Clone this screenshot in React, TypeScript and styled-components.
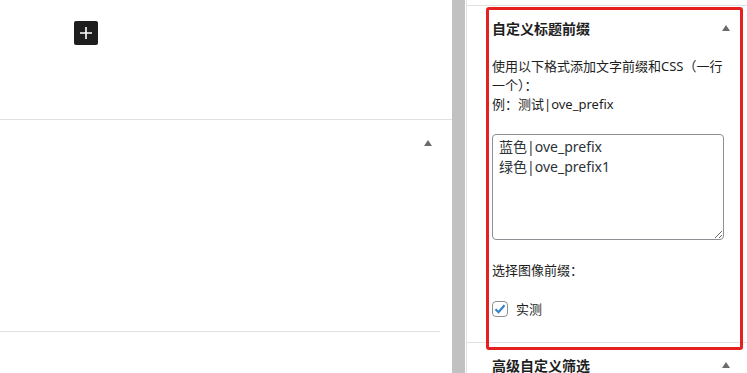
import React from 'react';
import styled, { createGlobalStyle } from 'styled-components';

const Global = createGlobalStyle`
  html, body { margin: 0; padding: 0; background: #fff; }
  body { font-family: "Noto Sans", "Noto Sans CJK SC", sans-serif; color: #1e1e1e; }
  * { box-sizing: border-box; }
`;

const Page = styled.div`
  display: flex;
  width: 747px;
  height: 373px;
  overflow: hidden;
  background: #fff;
`;

const Editor = styled.div`
  width: 452px;
  flex-shrink: 0;
  display: flex;
  flex-direction: column;
`;

const EditorTop = styled.div`
  height: 120px;
  flex-shrink: 0;
  border-bottom: 1px solid #e0e0e0;
  padding: 21px 0 0 74px;
`;

const PlusButton = styled.button`
  width: 24px;
  height: 24px;
  border: none;
  border-radius: 2px;
  background: #1e1e1e;
  padding: 0;
  display: flex;
  align-items: center;
  justify-content: center;
  cursor: pointer;
`;

const MetaBox = styled.div`
  height: 212px;
  flex-shrink: 0;
  margin-right: 12px;
  border-bottom: 1px solid #e0e0e0;
  display: flex;
  justify-content: flex-end;
  align-items: flex-start;
  padding: 20px 8px 0 0;
`;

const Caret = styled.span`
  display: block;
  width: 0;
  height: 0;
  border-left: 4px solid transparent;
  border-right: 4px solid transparent;
  border-bottom: 6px solid #6b6b6b;
`;

const Scrollbar = styled.div`
  width: 13px;
  flex-shrink: 0;
  background: #c1c1c1;
  margin-right: 1px;
`;

const Sidebar = styled.div`
  flex: 1;
  border-left: 1px solid #e0e0e0;
  display: flex;
  flex-direction: column;
`;

const PrevSection = styled.div`
  height: 6px;
  flex-shrink: 0;
  border-bottom: 1px solid #e0e0e0;
`;

const Section = styled.section<{ $height?: number }>`
  position: relative;
  flex-shrink: 0;
  ${(p) => (p.$height ? `height: ${p.$height}px;` : '')}
  border-bottom: 1px solid #e0e0e0;
  padding: 0 17px 0 25px;
`;

const Header = styled.div`
  height: 44px;
  display: flex;
  align-items: center;
  justify-content: space-between;
`;

const Title = styled.h2`
  margin: 0;
  font-size: 14px;
  font-weight: 700;
  color: #1e1e1e;
`;

const Body = styled.div`
  display: flex;
  flex-direction: column;
  padding-top: 7px;
  font-size: 13px;
  line-height: 19px;
  color: #1e1e1e;
`;

const Help = styled.p`
  margin: 0;
`;

const TextArea = styled.textarea`
  display: block;
  width: 232px;
  height: 106px;
  margin-top: 20px;
  border: 1px solid #8c8f94;
  border-radius: 4px;
  padding: 2px 6px;
  font-family: "Noto Sans", "Noto Sans CJK SC", sans-serif;
  font-size: 14px;
  line-height: 20px;
  color: #2c3338;
  resize: vertical;
  background: #fff;
`;

const Label = styled.div`
  margin-top: 21px;
`;

const CheckRow = styled.label`
  margin-top: 19px;
  display: flex;
  align-items: center;
  gap: 8px;
  height: 19px;
`;

const CheckBox = styled.span`
  width: 16px;
  height: 16px;
  border: 1px solid #8c8f94;
  border-radius: 4px;
  display: flex;
  align-items: center;
  justify-content: center;
  background: #fff;
`;

const CheckText = styled.span`
  padding-top: 1px;
`;

const Highlight = styled.div`
  position: absolute;
  left: 19px;
  top: 1px;
  width: 257px;
  height: 343px;
  border: 3px solid #e61f1f;
  border-radius: 3px;
  pointer-events: none;
  z-index: 2;
`;

export default function App() {
  return (
    <>
      <Global />
      <Page>
        <Editor>
          <EditorTop>
            <PlusButton aria-label="添加区块">
              <svg width="14" height="14" viewBox="0 0 14 14">
                <path d="M7 1v12M1 7h12" stroke="#fff" strokeWidth="1.6" />
              </svg>
            </PlusButton>
          </EditorTop>
          <MetaBox>
            <Caret />
          </MetaBox>
        </Editor>
        <Scrollbar />
        <Sidebar>
          <PrevSection />
          <Section $height={337}>
            <Highlight />
            <Header>
              <Title>自定义标题前缀</Title>
              <Caret />
            </Header>
            <Body>
              <Help>使用以下格式添加文字前缀和CSS（一行一个）：</Help>
              <Help>例：测试|ove_prefix</Help>
              <TextArea defaultValue={'蓝色|ove_prefix\n绿色|ove_prefix1'} />
              <Label>选择图像前缀：</Label>
              <CheckRow>
                <CheckBox>
                  <svg width="14" height="14" viewBox="0 0 14 14">
                    <path d="M2.5 7.2l3 3 6-7" stroke="#3582c4" strokeWidth="2.2" fill="none" />
                  </svg>
                </CheckBox>
                <CheckText>实测</CheckText>
              </CheckRow>
            </Body>
          </Section>
          <Section>
            <Header>
              <Title>高级自定义筛选</Title>
              <Caret />
            </Header>
          </Section>
        </Sidebar>
      </Page>
    </>
  );
}
